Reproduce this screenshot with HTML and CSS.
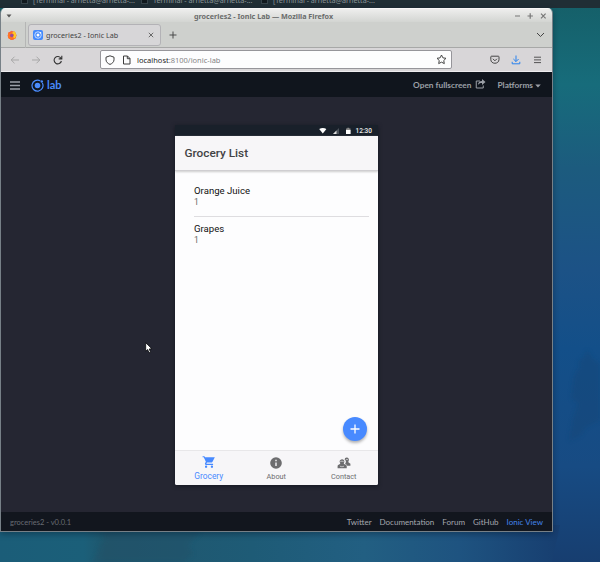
FILE: index.html
```html
<!DOCTYPE html>
<html lang="en">
<head>
<meta charset="utf-8">
<title>groceries2 - Ionic Lab</title>
<link rel="stylesheet" href="styles.css">
</head>
<body>
<svg class="wallpaper" width="600" height="562" viewBox="0 0 600 562">
  <defs>
    <linearGradient id="side" x1="0" y1="0" x2="0" y2="1"><stop offset="0" stop-color="#155f68"/><stop offset=".15" stop-color="#176c7b"/><stop offset=".3" stop-color="#1c5b7e"/><stop offset=".48" stop-color="#1c5286"/><stop offset=".62" stop-color="#134f89"/><stop offset=".83" stop-color="#174b83"/><stop offset="1" stop-color="#173e70"/></linearGradient>
    <linearGradient id="base"><stop offset="0" stop-color="#1b5d78"/><stop offset=".15" stop-color="#1b5f79"/><stop offset=".19" stop-color="#20566c"/><stop offset=".45" stop-color="#1e5b76"/><stop offset=".65" stop-color="#225f82"/><stop offset=".82" stop-color="#1e5380"/><stop offset="1" stop-color="#173e70"/></linearGradient>
    <filter id="soft"><feGaussianBlur stdDeviation="2"/></filter>
  </defs>
  <path fill="url(#side)" d="M0 0h600v562H0z"/>
  <path fill="url(#base)" d="M0 525h560l-8 37H0z"/>
  <path fill="#174575" opacity=".4" filter="url(#soft)" d="M587 350l-3 7-6 5 2 4-6 10-3 22 7 6-5 15-4 22 12-6 5-8 14-7V364l-6-4z"/>
  <path fill="#205168" opacity=".5" filter="url(#soft)" d="M103 532l2 7-5 6-2 7-5 10h90l10-8-5-9 12-13z"/>
</svg>
<div class="panel">
  <span class="task"><i></i>[Terminal - arnetta@arnetta-...</span>
  <span class="task"><i></i>Terminal - arnetta@arnetta-...</span>
  <span class="task"><i></i>[Terminal - arnetta@arnetta-...</span>
</div>
<div class="window">
  <div class="titlebar">
    <svg width="6" height="4" viewBox="0 0 6 4"><path d="M.5.5h5L3 3.500z" fill="#555"/></svg>
    <span class="window-title">groceries2 - Ionic Lab — Mozilla Firefox</span>
    <svg class="controls" width="34" height="8" viewBox="0 0 34 8" fill="none" stroke="#777" stroke-width="1.200"><path d="M1 4h5M13.500 4h5.400M16.200 1.300v5.400M27 1.700l4.600 4.600M31.600 1.700l-4.600 4.600"/></svg>
  </div>
  <div class="tabstrip">
    <div class="pinned">
      <svg width="10" height="10" viewBox="0 0 20 20"><circle cx="10" cy="11" r="8.500" fill="#f23b43"/><path d="M2 9l1-5 3 2 3-5 2 4 4-2 4 7-2 7-8 3-7-4z" fill="#ff7525"/><path d="M14 2c5 4 6 11 1 15l-3-3 2-5-4-3z" fill="#ffc928"/><circle cx="9.500" cy="11" r="3.500" fill="#9a4a9c"/></svg>
    </div>
    <div class="tab">
      <svg width="10" height="10" viewBox="0 0 20 20"><rect width="20" height="20" rx="4" fill="#438afe"/><circle cx="10" cy="10" r="6.500" fill="none" stroke="#e6efff" stroke-width="1.600"/><circle cx="10" cy="10" r="3" fill="#fff"/><circle cx="15" cy="5.500" r="1.700" fill="#fff"/></svg>
      <span class="tab-title">groceries2 - Ionic Lab</span>
      <svg class="tab-close" width="6" height="6" viewBox="0 0 6 6"><path d="M.8.8l4.400 4.400M5.200.8L.8 5.200" stroke="#4c4c4c" stroke-width=".8"/></svg>
    </div>
    <svg class="new-tab" width="8" height="8" viewBox="0 0 8 8"><path d="M4 .5v7M.5 4h7" stroke="#444" stroke-width=".95"/></svg>
    <svg class="all-tabs" width="9" height="6" viewBox="0 0 9 6"><path d="M1 1l3.500 3.500L8 1" fill="none" stroke="#444"/></svg>
  </div>
  <div class="toolbar">
    <svg class="nav" width="54" height="10" viewBox="0 0 54 10" fill="none"><path d="M9 5H1.200M4.500 1.700L1.200 5l3.300 3.300M22 5h7.800M26.500 1.700L29.800 5l-3.300 3.300" stroke="#a5a5a5" stroke-width=".95"/><path d="M51 3.300A3.700 3.700 0 1 0 51.400 6M51.800.8v3.100h-3.100" stroke="#333" stroke-width="1.100"/></svg>
    <div class="urlbar">
      <svg width="27" height="10" viewBox="0 0 27 10" fill="none" stroke="#3d3d3d"><path d="M5 .8l4 1.400v2.600C9 7 7 8.700 5 9.400 3 8.700 1 7 1 4.800V2.200z"/><path d="M18.500 1h4l2.500 2.500V9h-6.500zM22.300 1v2.700H25"/></svg>
      <span class="url"><b>localhost</b>:8100/ionic-lab</span>
      <svg class="star" width="11" height="11" viewBox="0 0 22 22"><path d="M11 2l2.800 5.700 6.200.9-4.500 4.400 1.100 6.200-5.600-2.900-5.600 2.900L6.500 13 2 8.600l6.200-.9z" fill="none" stroke="#3d3d3d" stroke-width="1.900" stroke-linejoin="round"/></svg>
    </div>
    <svg class="tools" width="52" height="10" viewBox="0 0 52 10" fill="none"><path d="M1.500 1.200h6.800q.7 0 .7.700v2.600c0 5-8.200 5-8.200 0V1.900q0-.7.700-.7zM2.900 3.800l2 2 2-2" stroke="#454545"/><path d="M26 .5v6M23.400 4l2.600 2.600L28.600 4M22.200 6.800v2h7.600v-2" stroke="#2881ee"/><path d="M44 2.200h7M44 4.900h7M44 7.600h7" stroke="#444" stroke-width=".9"/></svg>
  </div>
  <header class="lab-header">
    <svg class="burger" width="10" height="9" viewBox="0 0 10 9"><path d="M0 1h10M0 4.500h10M0 8h10" stroke="#9a9fa8" stroke-width="1.500"/></svg>
    <svg class="logo" width="13" height="13" viewBox="0 0 26 26"><path d="M18.500 3.700A11 11 0 1 0 22.700 8" fill="none" stroke="#4a8bfc" stroke-width="2.400"/><circle cx="13" cy="13" r="5.600" fill="#4a8bfc"/><circle cx="21.500" cy="5" r="2.500" fill="#4a8bfc"/></svg>
    <span class="brand">lab</span>
    <span class="fullscreen">Open fullscreen</span>
    <svg class="share" width="11" height="10" viewBox="0 0 22 20"><path d="M10 4H2.500v14h14v-5" fill="none" stroke="#9ca0a7" stroke-width="2"/><path d="M14 0l7 6-7 6V8c-4 0-6 1-8 4 0-5 3-8 8-8z" fill="#9ca0a7"/></svg>
    <span class="platforms">Platforms</span>
    <svg class="caret" width="6" height="4" viewBox="0 0 6 4"><path d="M.2.4h5.600L3 3.600z" fill="#9ca0a7"/></svg>
  </header>
  <main class="stage">
    <div class="phone">
      <div class="statusbar">
        <svg width="34" height="8" viewBox="0 0 34 8"><path d="M.2 2Q3.800-.2 7.400 2L3.800 6.500z" fill="#fff"/><path d="M20 1v6h-6z" fill="#4b5159"/><path d="M17.500 3.500V7H14z" fill="#ddd"/><path d="M27 1.500h1.300V.8h1.900v.7h1.300V7H27z" fill="#888"/><path d="M27 3h4.500v4H27z" fill="#fff"/></svg>
        <span>12:30</span>
      </div>
      <div class="app-header">Grocery List</div>
      <div class="list">
        <div class="item"><h2>Orange Juice</h2><p>1</p></div>
        <div class="item"><h2>Grapes</h2><p>1</p></div>
        <button class="fab" aria-label="Add"><svg width="10" height="10" viewBox="0 0 10 10"><path d="M5 .5v9M.5 5h9" stroke="#fff" stroke-width="1.300"/></svg></button>
      </div>
      <nav class="tabs">
        <div class="tab-item active"><svg width="14" height="14" viewBox="0 0 24 24" fill="currentColor"><path d="M7 18a2 2 0 1 0 0 4 2 2 0 0 0 0-4zM1 2v2h2l3.600 7.600-1.400 2.500C4.500 15.400 5.500 17 7 17h12v-2H7.400l1.200-2h7.400c.8 0 1.400-.4 1.800-1L22 4H5.200l-1-2zM17 18a2 2 0 1 0 0 4 2 2 0 0 0 0-4z"/></svg><span>Grocery</span></div>
        <div class="tab-item"><svg width="14" height="14" viewBox="0 0 24 24" fill="currentColor"><path d="M12 2a10 10 0 1 0 0 20 10 10 0 0 0 0-20zm1.200 15h-2.400v-6h2.400zm0-8h-2.400V6.600h2.400z"/></svg><span>About</span></div>
        <div class="tab-item"><svg width="14" height="14" viewBox="0 0 24 24" fill="currentColor"><path d="M16.500 2.500a4 4 0 0 1 3.200 6.400c-.6.900-.5 1.800.3 2.200l3 2v3.400h-5.500c-.8-1.800-2.500-2.400-3.700-3 2-2.300 2.200-5.600-.8-7.500a4 4 0 0 1 3.500-3.500z"/><path d="M8.500 5.500a4.300 4.300 0 0 1 3.400 6.700c-.5.800-.4 1.300.4 1.700l3.400 1.700c.7.400 1 .9 1 1.800V21H1v-3.600c0-.9.300-1.400 1-1.800l3-1.700c.8-.4.700-.9.200-1.700a4.300 4.300 0 0 1 3.300-6.700z"/><path d="M5.500 9.800l3-1 3 1M5 17.500l3.500 1 3.500-1M15 6.500l2-.7 2 .7" fill="none" stroke="#f7f7f8" stroke-width="1"/></svg><span>Contact</span></div>
      </nav>
    </div>
  </main>
  <footer class="lab-footer">
    <span class="version">groceries2 - v0.0.1</span>
    <a>Twitter</a><a>Documentation</a><a>Forum</a><a>GitHub</a><a class="view">Ionic View</a>
  </footer>
</div>
<svg class="cursor" width="8" height="12" viewBox="0 0 8 12"><path d="M.7.700v8.500l1.900-1.700 1.500 3.300 1.500-.7-1.400-3.100 2.700-.2z" fill="#fff" stroke="#08090d" stroke-width=".8"/></svg>
</body>
</html>
```
FILE: styles.css
```css
* { box-sizing: border-box; }
body { margin: 0; width: 600px; height: 562px; overflow: hidden; background: #1b5079; font-family: "Noto Sans", sans-serif; white-space: nowrap; }
svg { display: block; flex: none; }
.wallpaper { position: absolute; inset: 0; z-index: -1; }
.panel { height: 8px; background: #202e35; overflow: hidden; display: flex; padding-left: 21px; color: #8b9498; font-size: 7.200px; line-height: 10px; }
.task { width: 120px; display: flex; gap: 5px; margin-top: -5px; }
.task i { width: 7px; height: 9px; background: #11191e; border: 1px solid #36434a; }
.window { width: 553px; height: 524px; border: 1px solid #778087; border-top: 0; border-radius: 5px 5px 0 0; overflow: hidden; display: flex; flex-direction: column; box-shadow: 0 2px 6px rgba(0,20,40,.4); }
.titlebar { height: 14px; background: linear-gradient(#eeeeed, #d3d5d2); border-top: 1px solid #f7f7f7; display: flex; align-items: center; padding: 0 4px 0 5px; font-size: 7.200px; font-weight: 700; color: #6a6c6b; }
.window-title { margin-left: 182px; }
.controls { margin-left: auto; }
.tabstrip { height: 26px; background: #ced0cd; border-bottom: 1px solid #a7a8a7; display: flex; align-items: center; }
.pinned { width: 25px; height: 26px; padding: 8px 0 0 6px; border-right: 1px solid #b5b6b5; }
.tab { width: 133px; height: 22px; margin-left: 2px; border: 1px solid #b3b2b6; border-radius: 3px; background: #d7d6d8; display: flex; align-items: center; padding: 0 6px 0 4px; font-size: 7.200px; color: #444; }
.tab-title { margin-left: 3px; }
.tab-close { margin-left: auto; }
.new-tab { margin-left: 8px; }
.all-tabs { margin-left: auto; margin-right: 7px; }
.toolbar { height: 24px; background: #d8d6d8; display: flex; align-items: center; padding: 0 10px 0 9px; border-bottom: 1px solid #edecee; }
.urlbar { width: 352px; height: 19px; margin-left: 36px; border: 1px solid #96959a; border-radius: 2px; background: #fdfdfe; display: flex; align-items: center; padding: 0 4px; font-size: 7.500px; color: #858585; }
.url { margin-left: 5px; }
.url b { font-weight: 400; color: #252525; }
.star { margin-left: auto; }
.tools { margin-left: auto; }
.lab-header { height: 25px; background: #10151d; display: flex; align-items: center; padding: 1px 11px 0 9px; font-family: Lato, sans-serif; color: #9ca0a7; font-size: 8.300px; font-weight: 700; }
.logo { margin-left: 11px; }
.brand { margin-left: 3px; font-size: 11px; line-height: 12px; color: #4a8bfc; }
.fullscreen { margin-left: auto; }
.share { margin: -2px 11px 0 4px; }
.platforms { margin-right: 2px; }
.caret { margin-top: 1px; }
.stage { height: 415px; background: #252632; padding: 28px 0 0 174px; }
.phone { width: 202.500px; height: 360px; background: #fdfdfe; display: flex; flex-direction: column; border-radius: 0 0 2px 2px; overflow: hidden; box-shadow: 0 1px 4px #151821; font-family: Roboto, sans-serif; }
.statusbar { height: 11px; background: #19202a; display: flex; align-items: center; justify-content: flex-end; padding-right: 5.500px; color: #eee; font-size: 6.500px; font-weight: 500; gap: 3px; }
.app-header { height: 35px; background: #f7f6f8; border-bottom: 1px solid #cfced1; box-shadow: 0 1px 2px #ccc; display: flex; align-items: center; padding: 0 0 1px 9.500px; color: #424244; font-size: 11.800px; font-weight: 500; }
.list { position: relative; height: 279px; padding: 8px 9px 0 19px; }
.item { height: 38px; padding-top: 5px; }
.item:first-child { border-bottom: 1px solid #dedde0; }
.item h2 { margin: 0; font-size: 9.600px; line-height: 13px; font-weight: 400; color: #111; }
.item p { margin: 0; font-size: 8.500px; line-height: 11px; color: #666; }
.fab { position: absolute; right: 10.500px; bottom: 9px; width: 24px; height: 24px; padding: 0; border: 0; border-radius: 50%; background: #488aff; display: grid; place-items: center; box-shadow: 0 2px 3px rgba(0,0,0,.3); }
.tabs { height: 35px; background: #f7f6f8; border-top: 1px solid #e8e7e9; display: grid; grid-template-columns: repeat(3, 1fr); }
.tab-item { color: #6d6d6f; display: flex; flex-direction: column; align-items: center; padding-top: 5px; font-size: 7.300px; line-height: 14px; }
.active { color: #488aff; font-size: 8.400px; padding-top: 4px; }
.lab-footer { height: 19px; background: #12161e; display: flex; align-items: center; padding: 1px 9px 0 9px; font-family: Lato, sans-serif; font-size: 8px; color: #a5a8ae; }
.version { margin-right: auto; color: #686c73; font-size: 7.500px; }
.lab-footer a { margin-left: 8px; }
.lab-footer .view { color: #4384ea; }
.cursor { position: absolute; left: 145px; top: 342px; }
```
